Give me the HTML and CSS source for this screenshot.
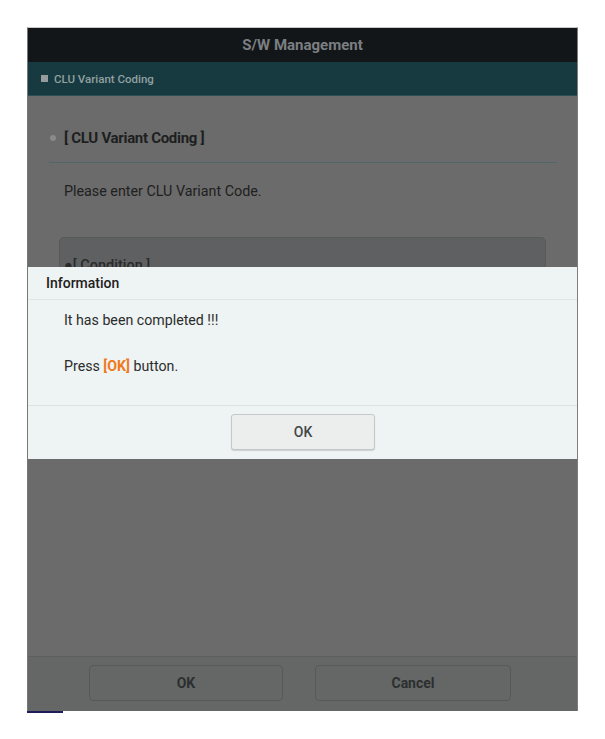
FILE: index.html
```html
<!DOCTYPE html>
<html lang="en">
<head>
<meta charset="utf-8">
<title>S/W Management</title>
<link rel="stylesheet" href="styles.css">
</head>
<body>
<div class="frame">
  <header class="topbar">S/W Management</header>
  <div class="subbar"><span class="sq"></span><span class="subtitle">CLU Variant Coding</span></div>
  <main class="content">
    <div class="section-head"><span class="dot"></span>[ CLU Variant Coding ]</div>
    <p class="prompt">Please enter CLU Variant Code.</p>
    <div class="condition">
      <div class="cond-title">●[ Condition ]</div>
    </div>
  </main>
  <footer class="footer">
    <button class="fbtn fbtn-ok">OK</button>
    <button class="fbtn fbtn-cancel">Cancel</button>
  </footer>

  <div class="dialog">
    <div class="dlg-head">Information</div>
    <div class="dlg-body">
      <p class="dlg-line">It has been completed !!!</p>
      <p class="dlg-line dlg-line2">Press <span class="hl">[OK]</span> button.</p>
    </div>
    <div class="dlg-foot">
      <button class="dbtn">OK</button>
    </div>
  </div>
</div>
<div class="mark"></div>
</body>
</html>
```
FILE: styles.css
```css
* { box-sizing: border-box; }
html, body { margin: 0; padding: 0; background: #ffffff; }
body {
  font-family: Roboto, "Noto Sans", "Liberation Sans", sans-serif;
  font-size: 14px;
  padding-top: 27px;
}
.frame {
  position: relative;
  margin-left: 27px;
  width: 551px;
  height: 684px;
  display: flex;
  flex-direction: column;
  border-top: 1px solid #c9c9c9;
  border-left: 1px solid #777777;
  border-right: 1px solid #7e7e7e;
  background: #6b6b6b;
}
.topbar {
  height: 34px;
  background: #121619;
  color: #7b7f81;
  font-weight: 700;
  font-size: 15px;
  display: flex;
  align-items: center;
  justify-content: center;
}
.subbar {
  height: 34px;
  background: #173a40;
  border-bottom: 1px solid #2d4e53;
  display: flex;
  align-items: center;
  padding-left: 13px;
  gap: 6px;
}
.sq { width: 7px; height: 7px; background: #969c9d; }
.subtitle { color: #92a0a1; font-weight: 500; font-size: 11.5px; }
.content {
  flex: 1;
  padding: 30px 20px 0 21px;
  background: #6b6b6b;
}
.section-head {
  line-height: 24px;
  font-weight: 700;
  color: #1d1f20;
  font-size: 15px;
  letter-spacing: -0.3px;
  padding-bottom: 12px;
  border-bottom: 1px solid #50676a;
  display: flex;
  align-items: center;
}
.dot {
  width: 6px; height: 6px; border-radius: 50%;
  background: #8a8a8a;
  margin-left: 1px;
  margin-right: 8px;
}
.prompt {
  margin: 18px 0 0 15px;
  line-height: 20px;
  color: #1f2020;
  font-size: 14.3px;
}
.condition {
  margin: 36px 11px 0 10px;
  height: 150px;
  background: #5f6061;
  border: 1px solid #585959;
  border-radius: 5px;
  padding: 18px 0 0 4px;
}
.cond-title { line-height: 20px; color: #2a2b2b; font-size: 14.5px; font-weight: 500; }
.footer {
  height: 55px;
  border-top: 1px solid #5c5f5f;
  background: #646766;
  display: flex;
  align-items: flex-start;
  padding: 8px 0 0 61px;
  gap: 32px;
}
.fbtn {
  height: 36px;
  background: transparent;
  border: 1px solid #555959;
  border-radius: 4px;
  font-family: inherit;
  font-weight: 700;
  font-size: 14px;
  color: #2c2f30;
}
.fbtn-ok { width: 194px; }
.fbtn-cancel { width: 196px; }

.dialog {
  position: absolute;
  left: 0; right: 0;
  top: 239px;
  height: 192px;
  background: #eef3f3;
  display: flex;
  flex-direction: column;
}
.dlg-head {
  height: 33px;
  padding-left: 18px;
  display: flex;
  align-items: center;
  font-weight: 500;
  color: #1e2020;
  font-size: 14px;
  border-bottom: 1px solid #dfe4e4;
}
.dlg-body {
  height: 106px;
  padding: 10px 0 0 36px;
  border-bottom: 1px solid #dce1e1;
}
.dlg-line { margin: 0; line-height: 20px; color: #2b2d2d; font-size: 14.2px; }
.dlg-line2 { margin-top: 26px; }
.hl { color: #f07a1c; font-weight: 700; }
.dlg-foot {
  flex: 1;
  display: flex;
  justify-content: center;
  padding: 8px 0 0 1px;
}
.dbtn {
  width: 144px;
  height: 36px;
  background: #eceeee;
  border: 1px solid #c5c8c8;
  border-radius: 3px;
  box-shadow: 0 1px 1px rgba(0,0,0,0.15);
  font-family: inherit;
  font-weight: 500;
  font-size: 14px;
  color: #444748;
}
.mark {
  margin-left: 27px;
  width: 36px;
  height: 2px;
  background: #1f1c5a;
}
```
